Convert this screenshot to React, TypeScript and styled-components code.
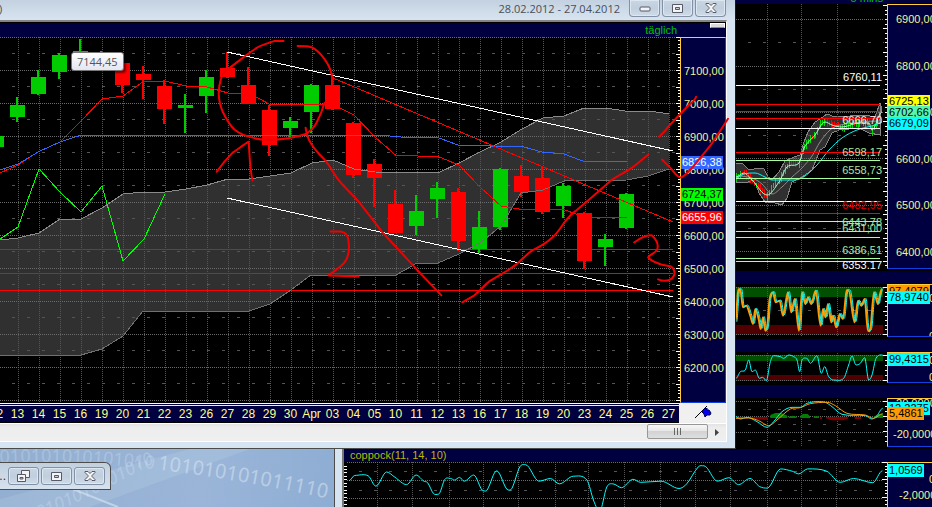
import React from "react";
import styled, { createGlobalStyle } from "styled-components";

const NAVY = "#000040";
const GOLD = "#ffcc33";
const FRAME = "#d7e4f1";
const RED = "#ff0000";
const GREEN = "#00cc00";
const CYAN = "#00ffff";
const ORANGE = "#ff9a00";

const GlobalStyle = createGlobalStyle`
  * { box-sizing: border-box; }
  body { margin: 0; background: #000; font-family: "Liberation Sans", Arial, sans-serif; font-size: 12px; }
  button { font: inherit; padding: 0; margin: 0; }
`;

const Desktop = styled.div`
  display: grid;
  grid-template-columns: minmax(0, 1fr) 196px;
  grid-template-rows: auto minmax(58px, 1fr);
  min-height: 100vh;
  overflow: hidden;
`;

const Window = styled.main`
  position: relative;
  display: flex;
  flex-direction: column;
  min-width: 0;
  padding: 0 8px 6px 0;
  background: ${FRAME};
  border-right: 1px solid #15181c;
  border-bottom: 1px solid #4b4b4b;
`;

const TitleBar = styled.header`
  display: flex;
  justify-content: flex-end;
  align-items: flex-start;
  gap: 2px;
  height: 20px;
  margin-right: -8px;
  padding-right: 9px;
  background: linear-gradient(#c3d1e0, #d8e4f0);
  color: #474f5a;
  font: 11px/17px "Open Sans", sans-serif;
`;

const TitleStart = styled.span`
  margin-left: -1px;
  margin-right: auto;
`;

const Period = styled.h1`
  margin: 0 7px 0 0;
  font: inherit;
`;

const WindowButton = styled.button<{ $small?: boolean }>`
  display: flex;
  flex: none;
  align-items: center;
  justify-content: center;
  width: 31px;
  height: ${(p) => (p.$small ? 18 : 17)}px;
  border: 1px solid #8291a6;
  border-top-width: ${(p) => (p.$small ? 1 : 0)}px;
  border-radius: ${(p) => (p.$small ? "3px" : "0 0 4px 4px")};
  background: linear-gradient(#c9d6e4, #c0cedd 50%, #cfdbe8);
  box-shadow: inset 0 0 0 1px #dde7f1;
`;

const Client = styled.div`
  display: flex;
  flex-direction: column;
  border-top: 2px solid #858585;
  border-right: 1px solid #fff;
`;

const ChartHeader = styled.div`
  display: flex;
  justify-content: flex-end;
  height: 15px;
  border-top: 1px solid #000;
  border-right: 1px solid #000;
  background: ${NAVY};
  color: #00c000;
  font-size: 11px;
  line-height: 14px;
`;

const Interval = styled.span`
  margin-right: 33px;
`;

const HeaderKnob = styled.button`
  width: 15px;
  height: 5px;
  border: 1px solid #fff;
  border-bottom-color: #888;
  background: #dcdcdc;
`;

const PlotRow = styled.div<{ $height: number }>`
  display: flex;
  height: ${(p) => p.$height}px;
  background: #000;
`;

const PlotArea = styled.div`
  position: relative;
  flex: 1;
  min-width: 0;
  overflow: hidden;
  background: #000;
`;

const PlotSvg = styled.svg`
  display: block;
  width: 100%;
  height: 100%;
  line, path, polyline, polygon { vector-effect: non-scaling-stroke; }
`;

const Axis = styled.div<{ $main?: boolean }>`
  position: relative;
  flex: none;
  width: ${(p) => (p.$main ? 46 : 45)}px;
  overflow: hidden;
  border-top: 1px solid ${GOLD};
  border-left: 1px solid ${GOLD};
  border-right: ${(p) => (p.$main ? "1px solid #1040e0" : "0")};
  border-bottom: 1px solid #1040e0;
  background: ${NAVY};
`;

const AxisLabels = styled.div<{ $start: number; $height: number; $indent: number }>`
  display: flex;
  flex-direction: column;
  height: ${(p) => p.$height}px;
  margin-top: ${(p) => p.$start}px;
  padding-left: ${(p) => p.$indent}px;
`;

const AxisLabel = styled.span`
  display: flex;
  flex: 1;
  align-items: center;
  white-space: nowrap;
  color: #f4f48c;
  font-size: 11px;
`;

const PriceTag = styled.span<{ $top: number; $color: string; $ink?: string }>`
  position: absolute;
  top: ${(p) => p.$top}px;
  left: 0;
  padding: 0 1px;
  background: ${(p) => p.$color};
  color: ${(p) => p.$ink ?? "#000"};
  font-size: 11px;
  line-height: 13px;
`;

const LevelLabel = styled.span<{ $top: number; $color: string }>`
  position: absolute;
  top: ${(p) => p.$top}px;
  right: 5px;
  color: ${(p) => p.$color};
  font-size: 11px;
  line-height: 13px;
`;

const HoverValue = styled.div`
  position: absolute;
  top: 15px;
  left: 71px;
  padding: 0 5px;
  border: 1px solid #777;
  border-radius: 3px;
  background: linear-gradient(#fff, #e4e5f0);
  box-shadow: 2px 2px 2px rgba(0, 0, 0, 0.5);
  color: #555;
  font: 11px/17px "Open Sans", sans-serif;
`;

const DateRow = styled.div`
  display: flex;
  height: 20px;
`;

const DateStrip = styled.div`
  flex: 1;
  min-width: 0;
  overflow: hidden;
  border-top: 1px solid #fff;
  border-bottom: 1px solid #000;
  background: ${NAVY};
`;

const DateCells = styled.div`
  display: flex;
  height: 17px;
  margin: 1px 0 0 -14px;
  border-top: 1px solid #ffff66;
`;

const DateCell = styled.span`
  flex: 1;
  min-width: 0;
  text-align: center;
  white-space: nowrap;
  color: #ffff80;
  line-height: 16px;
`;

const PenCell = styled.button`
  width: 47px;
  border: 0;
  background: #f0f0f0;
`;

const ScrollRow = styled.div`
  display: flex;
  justify-content: flex-end;
  height: 19px;
  border-top: 1px solid #fff;
  border-bottom: 1px solid #fff;
  background: linear-gradient(#e3e3e3, #ededed 4px, #efefef);
`;

const ScrollThumb = styled.button`
  width: 61px;
  height: 15px;
  border: 1px solid #979797;
  border-radius: 2px;
  background: linear-gradient(#f6f6f6, #e6e6e6 48%, #d3d3d3 50%, #dedede);
`;

const ScrollArrow = styled.button`
  width: 18px;
  height: 15px;
  border: 0;
  background: none;
`;

const Annotation = styled.svg`
  position: absolute;
  inset: 0;
  width: 100%;
  height: 100%;
  overflow: visible;
  pointer-events: none;
  z-index: 2;
`;

const SideColumn = styled.aside`
  display: flex;
  flex-direction: column;
  min-width: 0;
  background: #000;
`;

const SideTop = styled.div`
  display: flex;
  flex-direction: column;
  justify-content: flex-end;
  align-items: flex-end;
  height: 4px;
  padding-right: 49px;
  overflow: hidden;
  background: ${NAVY};
  color: #00c000;
  font-size: 11px;
  line-height: 12px;
`;

const Strip = styled.div`
  height: 13px;
  margin-top: 2px;
  background: ${NAVY};
`;

const BottomRow = styled.section`
  grid-column: 1 / -1;
  display: flex;
  min-width: 0;
`;

const Wallpaper = styled.div`
  position: relative;
  flex: none;
  width: 334px;
  overflow: hidden;
  background: linear-gradient(100deg, #92aed0, #9ab5d8 60%, #8eadd3);
`;

const WallpaperArt = styled.svg`
  position: absolute;
  inset: 0;
`;

const MinimizedWindow = styled.div`
  position: relative;
  display: flex;
  align-items: center;
  gap: 2px;
  width: 111px;
  height: 28px;
  margin-top: 13px;
  padding-right: 5px;
  justify-content: flex-end;
  border: 1px solid #4c4c4c;
  border-left: 0;
  border-radius: 0 6px 0 0;
  background: linear-gradient(#c2cfdd, #d6e2ee);
  color: #333;
`;

const FrameEdge = styled.div`
  flex: none;
  width: 10px;
  border-left: 1px solid #4c4c4c;
  border-right: 2px solid #777;
  background: ${FRAME};
`;

const Coppock = styled.div`
  display: flex;
  flex: 1;
  flex-direction: column;
  min-width: 0;
`;

const CoppockTitle = styled.h2`
  height: 13px;
  margin: 0;
  padding-left: 6px;
  background: ${NAVY};
  color: #b9b900;
  font: 11px/13px "Liberation Sans", sans-serif;
`;

const CoppockBody = styled.div`
  display: flex;
  flex: 1;
  height: 45px;
`;

type GridProps = {
  x: [number, number];
  y: [number, number];
  cols: number[];
  rows: number[];
  dashes: number[];
};

function Grid({ x, y, cols, rows, dashes }: GridProps) {
  return (
    <g stroke="#6a6a6a" shapeRendering="crispEdges" fill="none">
      {cols.map((c) => (
        <line key={`c${c}`} x1={c} x2={c} y1={y[0]} y2={y[1]} strokeDasharray="1 1" stroke="#555" />
      ))}
      {rows.map((r) => (
        <line key={`r${r}`} x1={x[0]} x2={x[1]} y1={r} y2={r} strokeDasharray="1 1" />
      ))}
      {dashes.map((d) => (
        <line key={`d${d}`} x1={x[0]} x2={x[1]} y1={d} y2={d} strokeDasharray="3 12" strokeDashoffset="3" stroke="#555" />
      ))}
    </g>
  );
}

function Ticks({ edge, from, to, step, len, major }: { edge: number; from: number; to: number; step: number; len: number; major: number }) {
  const n = Math.floor((to - from) / step) + 1;
  return (
    <g stroke="#fff" shapeRendering="crispEdges">
      {Array.from({ length: n }, (_, i) => (
        <line key={i} x1={edge} x2={edge - (i % major === 0 ? len * 2 : len)} y1={from + i * step} y2={from + i * step} />
      ))}
    </g>
  );
}

const range = (start: number, step: number, count: number) => Array.from({ length: count }, (_, i) => start + step * i);

// Turns "x,y x,y ..." into a rounded path through every point.
function smooth(points: string) {
  const p = points.split(" ").map((s) => s.split(",").map(Number));
  let d = `M${p[0][0]} ${p[0][1]}`;
  for (let i = 0; i < p.length - 1; i++) {
    const a = p[i - 1] ?? p[i];
    const b = p[i];
    const c = p[i + 1];
    const e = p[i + 2] ?? c;
    const third = (c[0] - b[0]) / 3;
    const turnB = (b[1] - a[1]) * (c[1] - b[1]) > 0;
    const turnC = (c[1] - b[1]) * (e[1] - c[1]) > 0;
    const slopeB = turnB ? (c[1] - a[1]) / (c[0] - a[0]) : 0;
    const slopeC = turnC ? (e[1] - b[1]) / (e[0] - b[0]) : 0;
    d += `C${b[0] + third} ${b[1] + slopeB * third} ${c[0] - third} ${c[1] - slopeC * third} ${c[0]} ${c[1]}`;
  }
  return d;
}

// centre x, body top, body bottom, wick top, wick bottom, rising
const CANDLES: [number, number, number, number, number, boolean][] = [
  [-3, 136, 147, 136, 147, true],
  [18, 105, 117, 97, 122, true],
  [39, 77, 94, 70, 95, true],
  [60, 55, 72, 53, 79, true],
  [81, 51, 64, 39, 68, true],
  [102, 54, 64, 51, 66, true],
  [123, 63, 85, 60, 93, false],
  [144, 74, 80, 66, 99, false],
  [165, 86, 109, 80, 124, false],
  [186, 105, 108, 94, 133, true],
  [207, 77, 96, 70, 113, true],
  [228, 68, 77, 52, 78, false],
  [249, 85, 104, 67, 104, false],
  [270, 110, 145, 105, 156, false],
  [291, 121, 128, 117, 137, true],
  [312, 85, 112, 84, 133, true],
  [333, 85, 109, 73, 110, false],
  [354, 123, 175, 122, 178, false],
  [375, 164, 178, 159, 207, false],
  [396, 204, 233, 190, 233, false],
  [417, 211, 226, 195, 235, true],
  [438, 188, 199, 182, 218, true],
  [459, 192, 241, 188, 251, false],
  [480, 227, 249, 211, 253, true],
  [501, 169, 227, 168, 230, true],
  [522, 176, 192, 165, 197, false],
  [543, 178, 212, 167, 214, false],
  [564, 186, 206, 183, 218, true],
  [585, 213, 261, 212, 269, false],
  [606, 239, 247, 234, 266, true],
  [627, 194, 228, 193, 229, true],
];

const CLOUD_TOP =
  "0,240 18,238 39,233 60,219 81,219 102,208 123,194 144,192 165,192 186,189 207,185 228,179 249,179 270,176 291,173 312,163 333,160 354,169 375,172 438,173 459,163 480,152 501,142 522,129 543,118 564,116 584,108 606,108 625,111 650,111 669,114";
const CLOUD_BOTTOM =
  "669,169 648,176 627,180 564,181 543,190 521,193 501,226 480,243 459,254 438,263 417,263 396,275 311,275 291,290 270,304 249,311 143,311 123,336 102,349 81,355 0,355";

const DATES = "12 13 14 15 16 19 20 21 22 23 26 27 28 29 30 Apr 03 04 05 10 11 12 13 16 17 18 19 20 23 24 25 26 27".split(" ");

function MainChart() {
  return (
    <PlotSvg viewBox="0 37 680 366" preserveAspectRatio="none" role="img" aria-label="Tageschart">
      <polygon points={`${CLOUD_TOP} ${CLOUD_BOTTOM}`} fill="#303030" />
      <Grid
        x={[0, 676]}
        y={[37, 403]}
        cols={range(18.5, 21, 32)}
        rows={range(37.5, 33, 12)}
        dashes={range(53.5, 33, 11)}
      />
      <g stroke={RED} shapeRendering="crispEdges">
        {[249.5, 273.5, 290.5].map((y) => (
          <line key={y} x1="0" x2="673" y1={y} y2={y} />
        ))}
      </g>
      <g shapeRendering="crispEdges">
        {CANDLES.map(([x, top, bottom, high, low, up]) => (
          <g key={x} fill={up ? GREEN : RED}>
            <rect x={x - 2} y={high} width="2" height={low - high} />
            <rect x={x - 8} y={top} width="15" height={bottom - top} />
          </g>
        ))}
      </g>
      <g fill="none" shapeRendering="crispEdges">
        <polyline points={CLOUD_TOP} stroke="#8a8a8a" />
        <polyline points={CLOUD_BOTTOM} stroke="#707070" />
        <polyline
          stroke={RED}
          points="0,173 18,165 38,152 60,142 81,121 102,99 123,96 144,81 165,81 186,86 207,87 228,93 249,93 270,104.500 333,104.500 354,115 375,137 396,155.500 438,156.500 459,165 480,187 501,206 522,209.500 564,209.500 585,217.500 627,217.500"
        />
        <polyline
          stroke="#3366ff"
          points="0,170 18,164 38,152 60,142 80,135.500 385,135.500 406,137.500 438,137.500 459,145.500 522,146.500 542,152 564,154 584,161.500 627,161.500"
        />
        <polyline stroke="#00ff00" points="0,239 18,227 39,169 60,192 81,212 102,186 123,261 144,239 165,194" />
        <line x1="333" y1="78" x2="673" y2="222" stroke={RED} />
        <line x1="227" y1="52" x2="673" y2="151" stroke="#fff" />
        <line x1="227" y1="198" x2="673" y2="297" stroke="#fff" />
      </g>
      <Ticks edge={680} from={37.5} to={403} step={3.3} len={2} major={5} />
    </PlotSvg>
  );
}

const CLOSES: [number, number][] = [
  [736, 177], [744, 173], [752, 180], [760, 189], [767, 197], [773, 185], [779, 180], [787, 166], [793, 161], [799, 163], [804, 147],
  [810, 139], [815, 135], [820, 124], [825, 121], [832, 125], [842, 127], [859, 123], [869, 122], [872, 131], [877, 122], [882, 106],
];

function SideCandles() {
  const bars = [];
  for (let i = 0; i < CLOSES.length - 1; i++) {
    const [x0, y0] = CLOSES[i];
    const [x1, y1] = CLOSES[i + 1];
    for (let x = x0; x < x1; x += 2) {
      const y = y0 + ((y1 - y0) * (x - x0)) / (x1 - x0);
      const up = (y1 < y0) !== (x % 7 === 0);
      const size = 2 + ((x * 5) % 7) / 2;
      bars.push(<rect key={x} x={x} y={y - size} width="1" height={size * 2} fill={up ? "#00dd00" : RED} />);
    }
  }
  return <g shapeRendering="crispEdges">{bars}</g>;
}

const LEVELS: [number, string][] = [
  [85.5, "#fff"], [104.5, RED], [111.5, RED], [118.5, RED], [128.5, "#fff"], [152.5, RED], [160.5, "#a8ffa0"], [178.5, "#a8ffa0"],
  [201.5, "#fff"], [213.5, RED], [221.5, "#a8ffa0"], [231.5, "#a8ffa0"], [237.5, "#a8ffa0"], [258.5, "#a8ffa0"], [261.5, "#a8ffa0"],
];

const LEVEL_LABELS: [number, string, string][] = [
  [67, "6760,11", "#fff"],
  [110, "6666,70", "#ffe0e0"],
  [142, "6598,17", "#a8e8a0"],
  [160, "6558,73", "#a8e8a0"],
  [195, "6482,95", "#e00000"],
  [212, "6443,78", "#a8e8a0"],
  [218, "6431,00", "#a8e8a0"],
  [240, "6386,51", "#a8e8a0"],
  [255, "6353,17", "#fff"],
];

function SideChart() {
  return (
    <PlotSvg viewBox="736 4 151 265" preserveAspectRatio="none" role="img" aria-label="Intraday-Chart">
      <polygon
        fill="#303030"
        stroke="#858585"
        shapeRendering="crispEdges"
        points="735,163 742,163 749,170 759,168 764,169 768,177 772,180 779,172 785,161 794,157 800,155 804,142 808,132 815,122 820,119 827,114 835,117 865,115 875,117 880,103 880,135 869,133 859,128 839,130 832,133 825,147 820,150 812,170 802,177 792,182 787,198 782,205 775,203 765,202 759,193 754,180 745,183 735,182"
      />
      <Grid
        x={[736, 884]}
        y={[4, 269]}
        cols={[767.5, 801.5, 837.5]}
        rows={[19.5, 66.5, 112.5, 158.5, 205.5, 251.5]}
        dashes={[42.5, 89.5, 135.5, 182.5, 228.5]}
      />
      <SideCandles />
      <g fill="none">
        <path stroke="#8a8a8a" d={smooth("736,176 752,178 762,184 772,194 782,187 792,177 802,168 812,156 820,142 830,130 840,125 880,121")} />
        <path stroke="#a0ffc8" d={smooth("736,177 744,173 752,180 767,195 779,182 787,167 799,163 804,148 815,135 825,122 832,125 842,127 859,123 869,123 872,130 882,112")} />
        <path stroke={CYAN} d={smooth("736,178 744,174 755,173 765,177 772,180 795,180 805,176 817,165 829,150 842,138 857,130 875,125 882,122")} />
      </g>
      <g shapeRendering="crispEdges">
        {LEVELS.map(([y, color]) => (
          <line key={y} x1="736" x2="880" y1={y} y2={y} stroke={color} />
        ))}
      </g>
      <Ticks edge={887} from={5.5} to={269} step={4.65} len={2} major={5} />
    </PlotSvg>
  );
}

const STOCHASTIC = smooth(
  "12,140 20,50 27,42 35,95 45,90 57,120 65,145 72,100 82,130 88,160 95,125 102,165 108,150 115,70 125,50 133,80 145,75 155,120 170,50 180,110 190,70 203,165 212,50 222,85 230,65 240,85 253,45 268,150 275,100 283,125 290,85 300,140 305,120 315,155 325,115 335,130 345,50 352,45 370,140 380,75 390,90 400,70 410,165 418,155 428,50 440,85 445,60 452,40",
);

function StochasticChart() {
  return (
    <PlotSvg viewBox="12 27 453 159" preserveAspectRatio="none" role="img" aria-label="Stochastik">
      <rect x="12" y="36" width="441" height="30" fill="#005000" />
      <rect x="12" y="150" width="441" height="29" fill="#500000" />
      <Grid x={[12, 453]} y={[30, 183]} cols={[106.5, 208.5, 316.5]} rows={[37.5, 178.5]} dashes={[106.5]} />
      <g fill="none" strokeLinejoin="round">
        <path d={STOCHASTIC} stroke={ORANGE} strokeWidth="2" transform="translate(-2 2)" />
        <path d={STOCHASTIC} stroke={CYAN} transform="translate(2 0)" />
      </g>
      <Ticks edge={465} from={37.5} to={180} step={14.1} len={6} major={5} />
    </PlotSvg>
  );
}

function RsiChart() {
  return (
    <PlotSvg viewBox="12 231 453 93" preserveAspectRatio="none" role="img" aria-label="Oszillator">
      <rect x="12" y="240" width="441" height="18" fill="#005000" />
      <rect x="12" y="300" width="441" height="18" fill="#500000" />
      <Grid x={[12, 453]} y={[234, 321]} cols={[106.5, 208.5, 316.5]} rows={[241.5, 316.5]} dashes={[]} />
      <path
        fill="none"
        stroke={CYAN}
        d={smooth(
          "12,310 25,290 40,285 50,255 60,290 70,285 82,310 92,307 103,317 115,260 125,242 145,245 155,250 170,240 185,245 195,255 203,290 210,255 225,250 235,265 255,242 268,295 278,275 290,305 305,315 335,310 350,270 360,243 372,270 385,265 398,248 410,315 420,300 432,250 452,240",
        )}
      />
      <Ticks edge={465} from={241.5} to={318} step={15} len={6} major={5} />
    </PlotSvg>
  );
}

function MacdChart() {
  return (
    <PlotSvg viewBox="12 369 453 147" preserveAspectRatio="none" role="img" aria-label="MACD">
      <Grid
        x={[12, 453]}
        y={[372, 516]}
        cols={[106.5, 208.5, 316.5]}
        rows={[379.5, 424.5, 472.5]}
        dashes={[403.5, 448.5, 496.5]}
      />
      <path fill="#008000" d="M115 429v-9l15-6h18l18 8v7zM170 429v-4l12-3 12 3v4zM205 429v-7l8-5h14l7 7v5zM245 429v-5h16v5zM425 429v-4l15-8h13v12z" />
      <path fill="#800000" d="M12 426h22v5H12zM52 426h56v8H84l-32-4zM264 426h6v6h-6zM282 426h66v5l-16 5h-34l-16-6zM368 426h20v6h-20z" />
      <g fill="none">
        <path stroke={CYAN} d={smooth("12,425 25,432 45,427 75,440 105,457 125,440 150,410 180,397 205,397 225,385 255,380 280,382 300,395 330,418 400,422 420,432 435,422 452,400")} />
        <path stroke={ORANGE} d={smooth("12,430 50,429 80,437 110,452 135,435 175,402 205,398 235,386 285,382 310,392 345,415 400,420 425,430 452,416")} />
      </g>
      <Ticks edge={465} from={379.5} to={512} step={15} len={6} major={3} />
    </PlotSvg>
  );
}

function CoppockChart() {
  return (
    <PlotSvg viewBox="37 186 1415 135" preserveAspectRatio="none" role="img" aria-label="Coppock">
      <Grid
        x={[45, 1440]}
        y={[187, 321]}
        cols={[123, 216, 311, 400, 492, 587, 675, 769, 863, 952, 1045, 1140, 1228, 1321]}
        rows={[187.5, 235.5, 280.5]}
        dashes={[211.5, 259.5, 304.5]}
      />
      <path
        fill="none"
        stroke={CYAN}
        d={smooth(
          "50,235 65,221 100,222 120,249 148,212 170,226 200,245 225,220 245,236 255,240 270,268 283,270 300,231 315,229 325,233 338,226 350,236 375,220 400,261 410,259 435,209 465,259 475,254 495,199 510,193 545,236 575,229 598,243 635,223 670,233 688,288 703,314 722,251 738,243 760,253 790,231 810,239 863,236 910,255 930,243 960,199 975,196 1010,236 1040,227 1065,245 1095,229 1120,250 1140,254 1175,204 1205,210 1222,217 1245,204 1295,210 1330,239 1365,229 1415,240 1440,209",
        )}
      />
      <Ticks edge={1452} from={187.5} to={321} step={9} len={6} major={5} />
      <g stroke="#fff" shapeRendering="crispEdges">
        {range(196.5, 9, 14).map((y) => (
          <line key={y} x1="38" x2="46" y1={y} y2={y} />
        ))}
      </g>
    </PlotSvg>
  );
}

function HandDrawing() {
  return (
    <Annotation viewBox="0 0 736 449" preserveAspectRatio="none" aria-hidden="true">
      <g fill="none" stroke="#f00000" strokeWidth="2" strokeLinecap="round" strokeLinejoin="round">
        <path d="M284 41H275C269 43 262 45 257 48C251 52 247 55 243 58L230 68C225 71 222 75 221 80C218 90 218 100 223 112C227 120 230 126 235 130C240 134 245 136 250 137C257 140 262 140 270 140C280 140 295 138 307 134C312 130 315 127 317 123C320 117 323 110 325 103" />
        <path d="M298 46C306 46 311 46 315 49C321 53 325 59 328 64C332 71 333 76 333 84" />
        <path d="M306 128C307 135 308 139 311 143C315 150 320 155 325 160C331 167 334 174 338 179C344 187 353 195 360 203L383 233L398 249L420 273L442 296" />
        <path d="M217 172C222 165 227 159 233 153C239 149 244 145 249 142C250 155 250 170 253 181" />
        <path d="M331 232H341C346 233 349 236 349 242C350 250 349 258 345 263C341 268 334 272 329 276L359 277" />
        <path d="M463 303L475 296C481 291 485 286 490 282C499 276 508 272 517 265C523 260 528 254 533 251C541 247 548 243 553 238C558 234 561 229 565 223C569 218 572 214 577 211L590 200L613 180C619 176 627 172 633 168C639 164 644 159 649 155" />
        <path d="M635 243C642 238 648 235 653 236C657 240 660 245 658 250C656 254 652 254 649 258C652 262 657 263 662 265L672 267C677 271 676 276 673 279C669 282 664 282 659 280" />
        <path d="M660 137C664 134 667 130 670 126L690 105C693 103 696 100 697 97" />
        <path d="M663 160L672 169C676 174 678 178 682 178C688 175 693 168 699 161L712 145L729 119" />
      </g>
    </Annotation>
  );
}

const iconStroke = { fill: "#f4f4f4", stroke: "#555a66", strokeWidth: 1 };

const MinimizeIcon = () => (
  <svg width="12" height="7" aria-hidden="true">
    <rect x="1" y="2" width="10" height="4" rx="1" {...iconStroke} />
  </svg>
);
const MaximizeIcon = () => (
  <svg width="11" height="9" aria-hidden="true">
    <path fillRule="evenodd" d="M.5.5h10v8H.5zM3.500 3.500h4v2h-4z" {...iconStroke} />
  </svg>
);
const CloseIcon = () => (
  <svg width="12" height="10" aria-hidden="true">
    <path d="M1 .5h3l2 2 2-2h3v1L8 4.500v1l3 3v1H8l-2-2-2 2H1v-1l3-3v-1l-3-3z" {...iconStroke} />
  </svg>
);
const RestoreIcon = () => (
  <svg width="13" height="12" aria-hidden="true">
    <path d="M4.500.5h8v7h-8z" {...iconStroke} />
    <path fillRule="evenodd" d="M.5 4.500h8v7h-8zM3 7.500h3v1.500H3z" {...iconStroke} />
  </svg>
);

export default function App() {
  return (
    <>
      <GlobalStyle />
      <Desktop>
        <Window>
          <TitleBar>
            <TitleStart>)</TitleStart>
            <Period>28.02.2012 - 27.04.2012</Period>
            <WindowButton aria-label="Minimieren"><MinimizeIcon /></WindowButton>
            <WindowButton aria-label="Maximieren"><MaximizeIcon /></WindowButton>
            <WindowButton aria-label="Schließen"><CloseIcon /></WindowButton>
          </TitleBar>
          <Client>
            <ChartHeader>
              <Interval>täglich</Interval>
              <HeaderKnob aria-label="Einklappen" />
            </ChartHeader>
            <PlotRow $height={366}>
              <PlotArea>
                <MainChart />
                <HoverValue>7144,45</HoverValue>
              </PlotArea>
              <Axis $main>
                <AxisLabels $start={16} $height={330} $indent={3}>
                  {range(7100, -100, 10).map((v) => (
                    <AxisLabel key={v}>{v},00</AxisLabel>
                  ))}
                </AxisLabels>
                <PriceTag $top={118} $color="#3366ff" $ink="#fff">6826,38</PriceTag>
                <PriceTag $top={150} $color="#00ff00">6724,37</PriceTag>
                <PriceTag $top={173} $color="#ff0000" $ink="#fff">6655,96</PriceTag>
              </Axis>
            </PlotRow>
            <DateRow>
              <DateStrip>
                <DateCells>
                  {DATES.map((d, i) => (
                    <DateCell key={i}>{d}</DateCell>
                  ))}
                </DateCells>
              </DateStrip>
              <PenCell aria-label="Zeichnen">
                <svg width="18" height="14" aria-hidden="true">
                  <path d="M1 13 13 1" stroke="#000" />
                  <path d="M8 7l3-4 1 1 1-1v2h2l2 3-1 2-3 0-2 2-1-3z" fill="#0000f0" stroke="#000050" />
                </svg>
              </PenCell>
            </DateRow>
            <ScrollRow>
              <ScrollThumb aria-label="Bildlauf">
                <svg width="9" height="8" aria-hidden="true">
                  <path d="M1.500 0v7M4.500 0v7M7.500 0v7" stroke="#666" />
                </svg>
              </ScrollThumb>
              <ScrollArrow aria-label="Nach rechts">
                <svg width="5" height="7" aria-hidden="true">
                  <path d="M0 0v7l4-3.500z" fill="#444" />
                </svg>
              </ScrollArrow>
            </ScrollRow>
          </Client>
          <HandDrawing />
        </Window>

        <SideColumn>
          <SideTop><span>5 mins</span></SideTop>
          <PlotRow $height={265}>
            <PlotArea>
              <SideChart />
              {LEVEL_LABELS.map(([top, text, color]) => (
                <LevelLabel key={text} $top={top} $color={color}>{text}</LevelLabel>
              ))}
            </PlotArea>
            <Axis>
              <AxisLabels $start={-9} $height={279} $indent={8}>
                {range(6900, -100, 6).map((v) => (
                  <AxisLabel key={v}>{v},00</AxisLabel>
                ))}
              </AxisLabels>
              <PriceTag $top={90} $color="#ffff00">6725,13</PriceTag>
              <PriceTag $top={101} $color="#55f5b0">6702,66</PriceTag>
              <PriceTag $top={112} $color={CYAN}>6679,09</PriceTag>
            </Axis>
          </PlotRow>
          <Strip />
          <PlotRow $height={53}>
            <PlotArea><StochasticChart /></PlotArea>
            <Axis>
              <AxisLabels $start={-6} $height={76} $indent={41}>
                <AxisLabel>0</AxisLabel>
                <AxisLabel>0</AxisLabel>
              </AxisLabels>
              <PriceTag $top={0} $color={ORANGE}>97,4079</PriceTag>
              <PriceTag $top={6} $color={CYAN}>78,9740</PriceTag>
            </Axis>
          </PlotRow>
          <Strip />
          <PlotRow $height={31}>
            <PlotArea><RsiChart /></PlotArea>
            <Axis>
              <AxisLabels $start={-2} $height={34} $indent={41}>
                <AxisLabel>0</AxisLabel>
                <AxisLabel>0</AxisLabel>
              </AxisLabels>
              <PriceTag $top={0} $color={CYAN}>99,4315</PriceTag>
            </Axis>
          </PlotRow>
          <Strip />
          <PlotRow $height={49}>
            <PlotArea><MacdChart /></PlotArea>
            <Axis>
              <AxisLabels $start={-12} $height={62} $indent={5}>
                <AxisLabel>&nbsp;20,0000</AxisLabel>
                <AxisLabel>-20,0000</AxisLabel>
              </AxisLabels>
              <PriceTag $top={3} $color={CYAN}>12,2275</PriceTag>
              <PriceTag $top={8} $color={ORANGE}>5,4861</PriceTag>
            </Axis>
          </PlotRow>
        </SideColumn>

        <BottomRow>
          <Wallpaper>
            <WallpaperArt width="334" height="100%" aria-hidden="true">
              <defs>
                <path id="arc" d="M0 14C90 9 200 22 334 51" />
                <path id="rise" d="M30 74Q100 45 190 -6" />
              </defs>
              <path d="M55 33 118 58" stroke="#dbe8f4" strokeWidth="2" opacity=".6" />
              <path d="M0 50 190 0h60L90 58H0z" fill="#c8dcec" opacity=".2" />
              <g fill="#e6f0fa" fontFamily="Noto Sans" fontSize="18">
                <text opacity=".25"><textPath href="#arc">010101010101010</textPath></text>
                <text opacity=".45" fontSize="20"><textPath href="#arc" startOffset="158">101010101011110</textPath></text>
                <text opacity=".25" fontStyle="italic"><textPath href="#rise">10101010101010</textPath></text>
              </g>
            </WallpaperArt>
            <MinimizedWindow>
              <span>..</span>
              <WindowButton $small aria-label="Wiederherstellen"><RestoreIcon /></WindowButton>
              <WindowButton $small aria-label="Maximieren"><MaximizeIcon /></WindowButton>
              <WindowButton $small aria-label="Schließen"><CloseIcon /></WindowButton>
            </MinimizedWindow>
          </Wallpaper>
          <FrameEdge />
          <Coppock>
            <CoppockTitle>coppock(11, 14, 10)</CoppockTitle>
            <CoppockBody>
              <PlotArea><CoppockChart /></PlotArea>
              <Axis>
                <AxisLabels $start={8} $height={16} $indent={41}>
                  <AxisLabel>0</AxisLabel>
                </AxisLabels>
                <AxisLabels $start={0} $height={16} $indent={11}>
                  <AxisLabel>-2,0000</AxisLabel>
                </AxisLabels>
                <PriceTag $top={1} $color={CYAN}>1,0569</PriceTag>
              </Axis>
            </CoppockBody>
          </Coppock>
        </BottomRow>
      </Desktop>
    </>
  );
}
